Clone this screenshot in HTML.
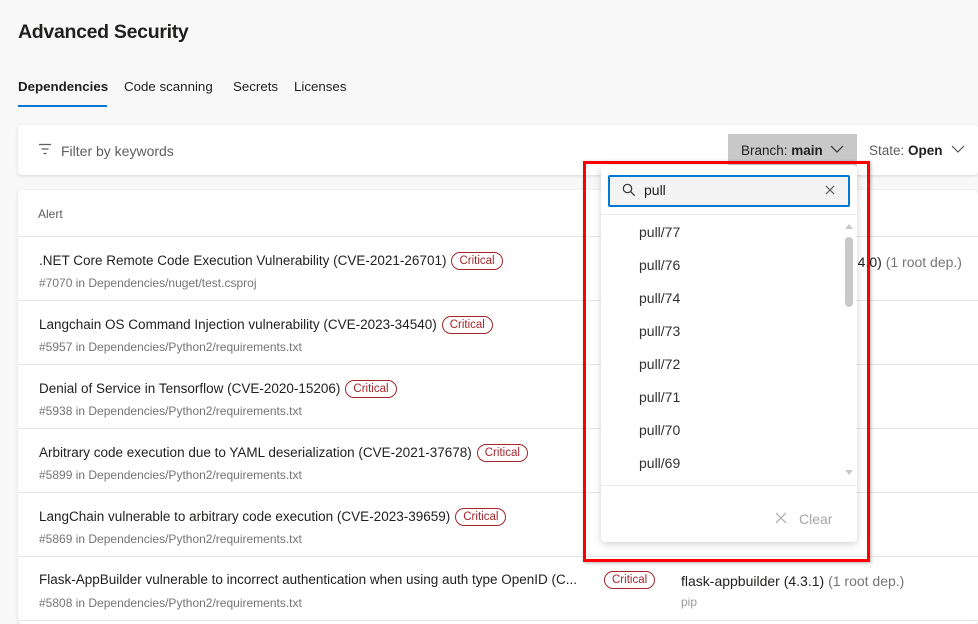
<!DOCTYPE html>
<html><head><meta charset="utf-8"><style>
*{box-sizing:border-box;margin:0;padding:0}
html,body{width:978px;height:624px;overflow:hidden}
body{background:#f8f8f8;font-family:"Liberation Sans",sans-serif;color:#201f1e;position:relative}
.abs{position:absolute}
h1{position:absolute;left:18px;top:21px;font-size:19.5px;font-weight:600;letter-spacing:-0.3px}
.tab{position:absolute;top:79px;font-size:13.3px}
.card{position:absolute;background:#fff;border-radius:4px;box-shadow:0 1px 3px rgba(0,0,0,.13)}
.row{position:absolute;left:0;width:960px;height:64px;border-top:1px solid #e6e6e6}
.t{position:absolute;left:21px;top:15px;font-size:13.5px;white-space:nowrap}
.s{position:absolute;left:21px;top:39px;font-size:12px;color:#757575;white-space:nowrap}
.crit{display:inline-block;border:1px solid #a4262c;color:#a4262c;border-radius:10px;font-size:11.5px;padding:2px 7px;margin-left:5px;vertical-align:1px}
.it{position:absolute;left:38px;font-size:14px;color:#323130}
</style></head><body>
<h1>Advanced Security</h1>
<div class="tab" style="left:18px;font-weight:600">Dependencies</div>
<div class="abs" style="left:18px;top:105px;width:89px;height:2px;background:#0078d4"></div>
<div class="tab" style="left:124px">Code scanning</div>
<div class="tab" style="left:233px">Secrets</div>
<div class="tab" style="left:294px">Licenses</div>

<div class="card" style="left:18px;top:125px;width:960px;height:50px">
<svg class="abs" style="left:20px;top:18px" width="14" height="12"><path d="M1 1.5h12M3.5 6h7M5.5 10.5h3" stroke="#605e5c" stroke-width="1.2"/></svg>
<div class="abs" style="left:43px;top:18px;font-size:14px;color:#605e5c">Filter by keywords</div>
<div class="abs" style="left:710px;top:9px;width:129px;height:32px;background:#c8c8c8"></div>
<div class="abs" style="left:723px;top:18px;font-size:13.5px">Branch: <b>main</b></div>
<svg class="abs" style="left:812px;top:20px" width="14" height="9"><path d="M1 1l6 6 6-6" stroke="#333" fill="none" stroke-width="1.2"/></svg>
<div class="abs" style="left:851px;top:18px;font-size:13.5px;color:#605e5c">State: <b style="color:#201f1e">Open</b></div>
<svg class="abs" style="left:933px;top:20px" width="14" height="9"><path d="M1 1l6 6 6-6" stroke="#555" fill="none" stroke-width="1.2"/></svg>
</div>

<div class="card" style="left:18px;top:190px;width:960px;height:434px">
<div class="abs" style="left:20px;top:17px;font-size:12px;color:#605e5c">Alert</div>
<div class="row" style="top:46px"><div class="t">.NET Core Remote Code Execution Vulnerability (CVE-2021-26701)<span class="crit">Critical</span></div><div class="s">#7070 in Dependencies/nuget/test.csproj</div><div class="abs" style="left:828px;top:17px;font-size:14px;white-space:nowrap">4.4.0) <span style="color:#757575">(1 root dep.)</span></div></div>
<div class="row" style="top:110px"><div class="t">Langchain OS Command Injection vulnerability (CVE-2023-34540)<span class="crit">Critical</span></div><div class="s">#5957 in Dependencies/Python2/requirements.txt</div></div>
<div class="row" style="top:174px"><div class="t">Denial of Service in Tensorflow (CVE-2020-15206)<span class="crit">Critical</span></div><div class="s">#5938 in Dependencies/Python2/requirements.txt</div></div>
<div class="row" style="top:238px"><div class="t">Arbitrary code execution due to YAML deserialization (CVE-2021-37678)<span class="crit">Critical</span></div><div class="s">#5899 in Dependencies/Python2/requirements.txt</div></div>
<div class="row" style="top:302px"><div class="t">LangChain vulnerable to arbitrary code execution (CVE-2023-39659)<span class="crit">Critical</span></div><div class="s">#5869 in Dependencies/Python2/requirements.txt</div></div>
<div class="row" style="top:366px"><div class="t">Flask-AppBuilder vulnerable to incorrect authentication when using auth type OpenID (C...</div><span class="crit abs" style="left:581px;top:14px">Critical</span><div class="s">#5808 in Dependencies/Python2/requirements.txt</div><div class="abs" style="left:663px;top:16px;font-size:14px;white-space:nowrap">flask-appbuilder (4.3.1) <span style="color:#757575">(1 root dep.)</span></div><div class="abs" style="left:663px;top:38px;font-size:12px;color:#999">pip</div></div>
<div class="abs" style="left:0;top:430px;width:960px;height:1px;background:#e6e6e6"></div>
</div>

<div class="abs" style="left:583px;top:161px;width:287px;height:401px;border:3px solid #f00;box-shadow:1px 1px 3px rgba(0,0,0,.3)"></div>
<div class="card" style="left:601px;top:165px;width:256px;height:377px;box-shadow:0 2px 8px rgba(0,0,0,.18)">
<div class="abs" style="left:7px;top:10px;width:242px;height:32px;border:2px solid #0078d4;border-radius:2px;background:#f3f3f3"></div>
<svg class="abs" style="left:21px;top:18px" width="14" height="14"><circle cx="5.5" cy="5.5" r="4.2" stroke="#333" fill="none" stroke-width="1.2"/><path d="M8.7 8.7l4 4" stroke="#333" stroke-width="1.3"/></svg>
<div class="abs" style="left:43px;top:17px;font-size:14px">pull</div>
<svg class="abs" style="left:224px;top:20px" width="10" height="10"><path d="M1 1l8 8M9 1l-8 8" stroke="#555" stroke-width="1.2"/></svg>
<div class="abs" style="left:0;top:49px;width:256px;height:1px;background:#eaeaea"></div>
<div class="it" style="top:59px">pull/77</div>
<div class="it" style="top:92px">pull/76</div>
<div class="it" style="top:125px">pull/74</div>
<div class="it" style="top:158px">pull/73</div>
<div class="it" style="top:191px">pull/72</div>
<div class="it" style="top:224px">pull/71</div>
<div class="it" style="top:257px">pull/70</div>
<div class="it" style="top:290px">pull/69</div>
<svg class="abs" style="left:243px;top:58px" width="10" height="7"><path d="M1 6l4-5 4 5z" fill="#c8c8c8"/></svg>
<div class="abs" style="left:244px;top:72px;width:8px;height:70px;background:#c8c8c8;border-radius:4px"></div>
<svg class="abs" style="left:243px;top:304px" width="10" height="7"><path d="M1 1l4 5 4-5z" fill="#c8c8c8"/></svg>
<div class="abs" style="left:0;top:320px;width:256px;height:1px;background:#eaeaea"></div>
<svg class="abs" style="left:174px;top:347px" width="12" height="12"><path d="M1 1l10 10M11 1l-10 10" stroke="#aaa" stroke-width="1.2"/></svg>
<div class="abs" style="left:198px;top:346px;font-size:14px;color:#a6a6a6">Clear</div>
</div>
</body></html>
